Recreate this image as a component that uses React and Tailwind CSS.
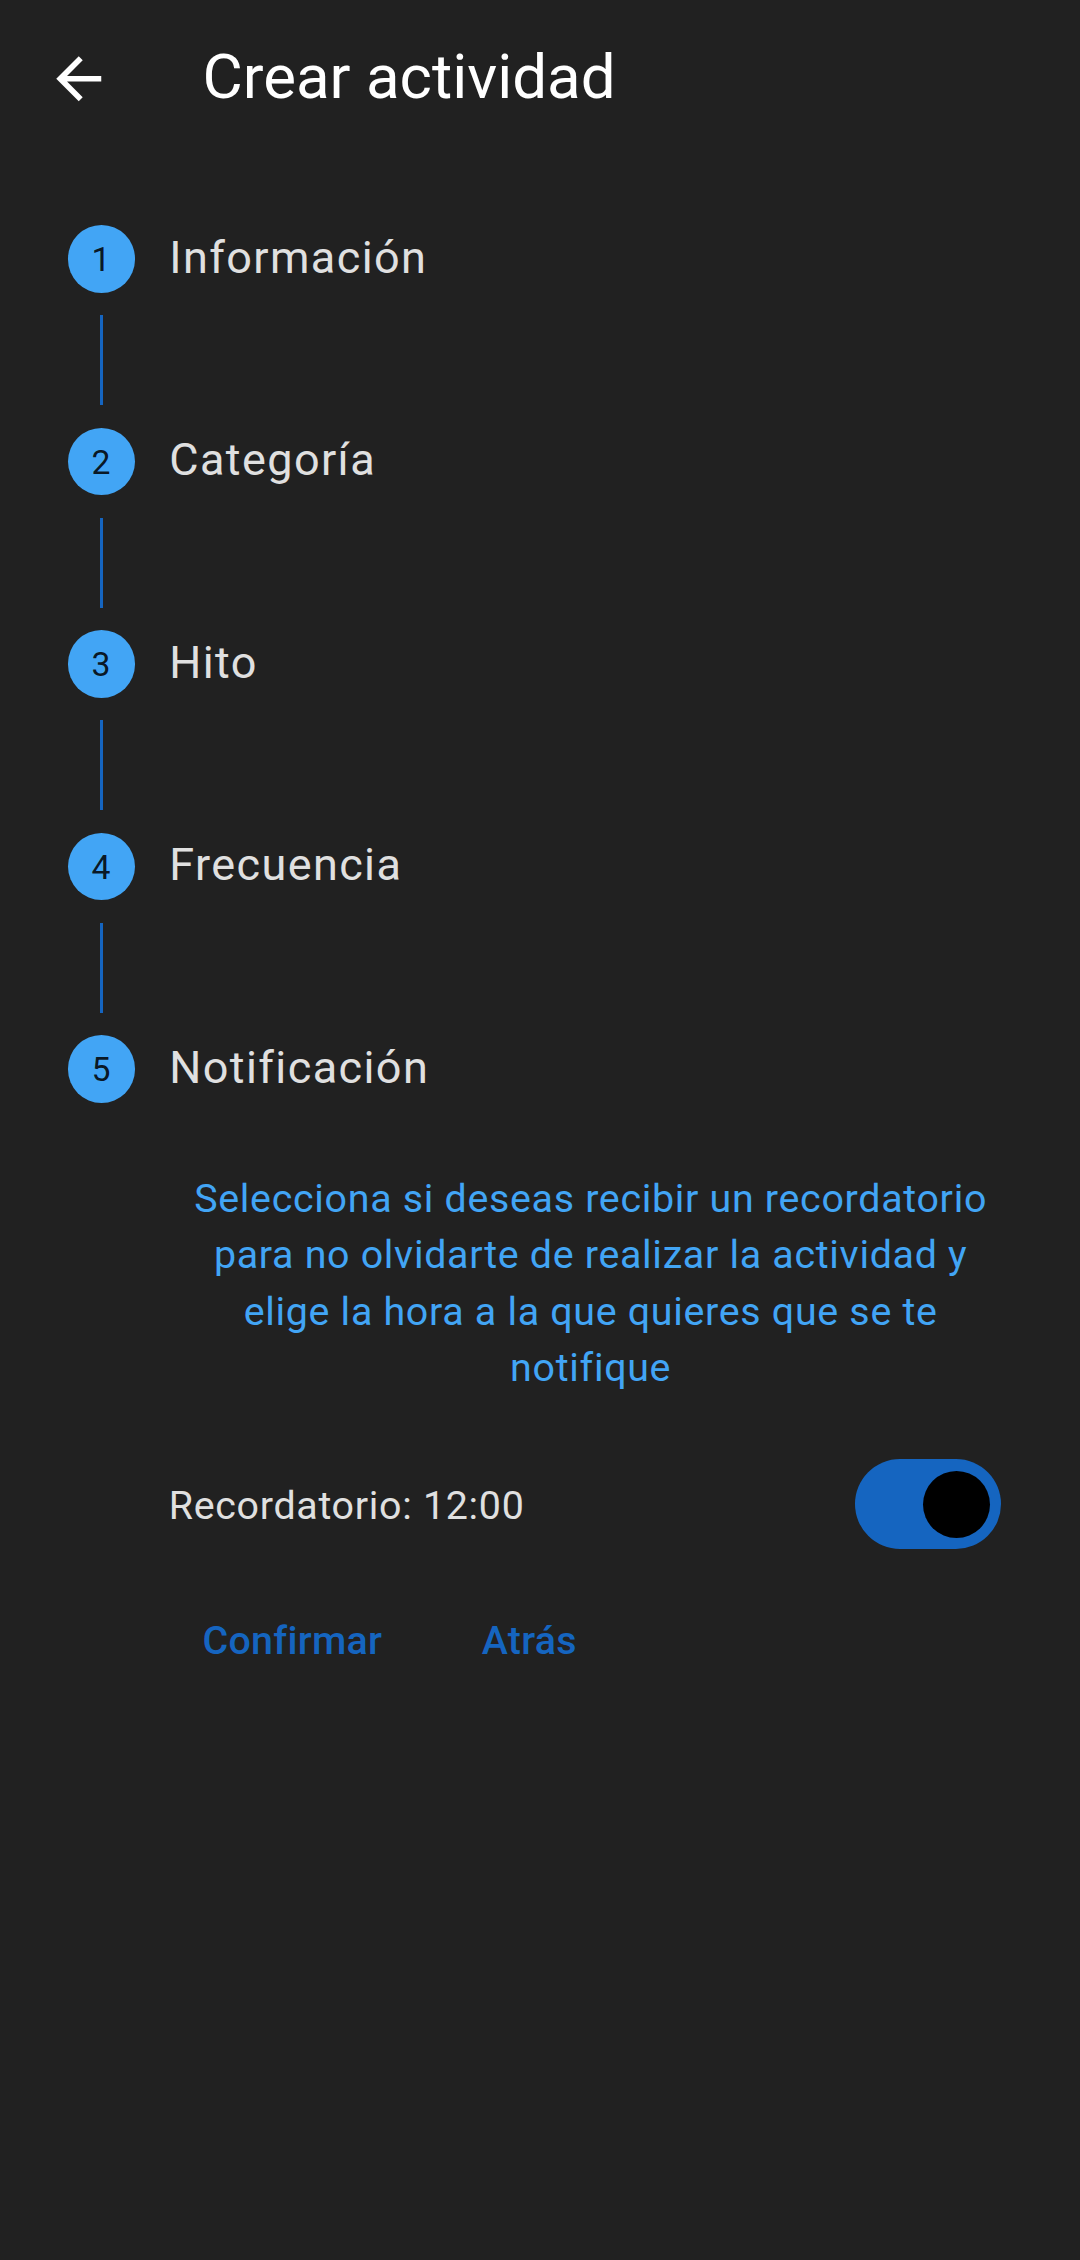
import React from "react";

const steps = ["Información", "Categoría", "Hito", "Frecuencia", "Notificación"];

function Step({ number, label, last }) {
  return (
    <li>
      <div className="flex h-[67.5px] items-center">
        <span className="flex size-[67.5px] items-center justify-center rounded-full bg-[#42a5f5] pt-[2.5px] text-[33.75px] leading-[46px] tracking-[0.3px] text-black/87">
          {number}
        </span>
        <span className="ml-[34.25px] pb-[1.5px] text-[45px] leading-[64.5px] tracking-[1.406px]">{label}</span>
      </div>
      {!last && <div className="my-[22.5px] ml-[32.35px] h-[90px] w-[2.8px] bg-[#1565c0]" />}
    </li>
  );
}

export default function App() {
  return (
    <div className="flex h-[2260px] w-[1080px] flex-col overflow-hidden bg-[#212121] font-['Roboto',sans-serif] text-[#e0e0e0]">
      <header className="flex h-[157.5px] items-center pl-[45px] text-white">
        <button aria-label="Volver">
          <svg viewBox="0 0 24 24" className="size-[67.5px]" fill="currentColor">
            <path d="M20 11H7.83l5.59-5.59L12 4l-8 8 8 8 1.41-1.41L7.83 13H20v-2z" />
          </svg>
        </button>
        <h1 className="ml-[90px] pb-1 text-[61.875px] leading-[78px]">Crear actividad</h1>
      </header>

      <main className="pt-[67.5px] pr-[67.5px] pl-[67.5px]">
        <ol>
          {steps.map((label, i) => (
            <Step key={label} number={i + 1} label={label} last={i === steps.length - 1} />
          ))}
        </ol>

        <section className="mt-[68.5px] ml-[101.25px] text-[39.375px] leading-[56.25px] tracking-[0.703px]">
          <p className="text-center text-[#42a5f5]">
            Selecciona si deseas recibir un recordatorio para no olvidarte de realizar la actividad y elige la hora a
            la que quieres que se te notifique
          </p>

          <div className="mt-[63.3px] flex h-[90px] items-center justify-between pr-[11.25px]">
            <span className="pt-[3.5px]">Recordatorio: 12:00</span>
            <button
              role="switch"
              aria-checked="true"
              aria-label="Recordatorio"
              className="flex h-[90px] w-[146.25px] items-center justify-end rounded-full bg-[#1565c0] pr-[11.25px]"
            >
              <span className="size-[67.5px] rounded-full bg-black" />
            </button>
          </div>

          <div className="mt-[35.5px] flex h-[112.5px] items-center gap-[32px] font-medium tracking-[0.281px] text-[#1565c0]">
            <button className="px-[33.75px]">Confirmar</button>
            <button className="px-[33.75px]">Atrás</button>
          </div>
        </section>
      </main>
    </div>
  );
}
